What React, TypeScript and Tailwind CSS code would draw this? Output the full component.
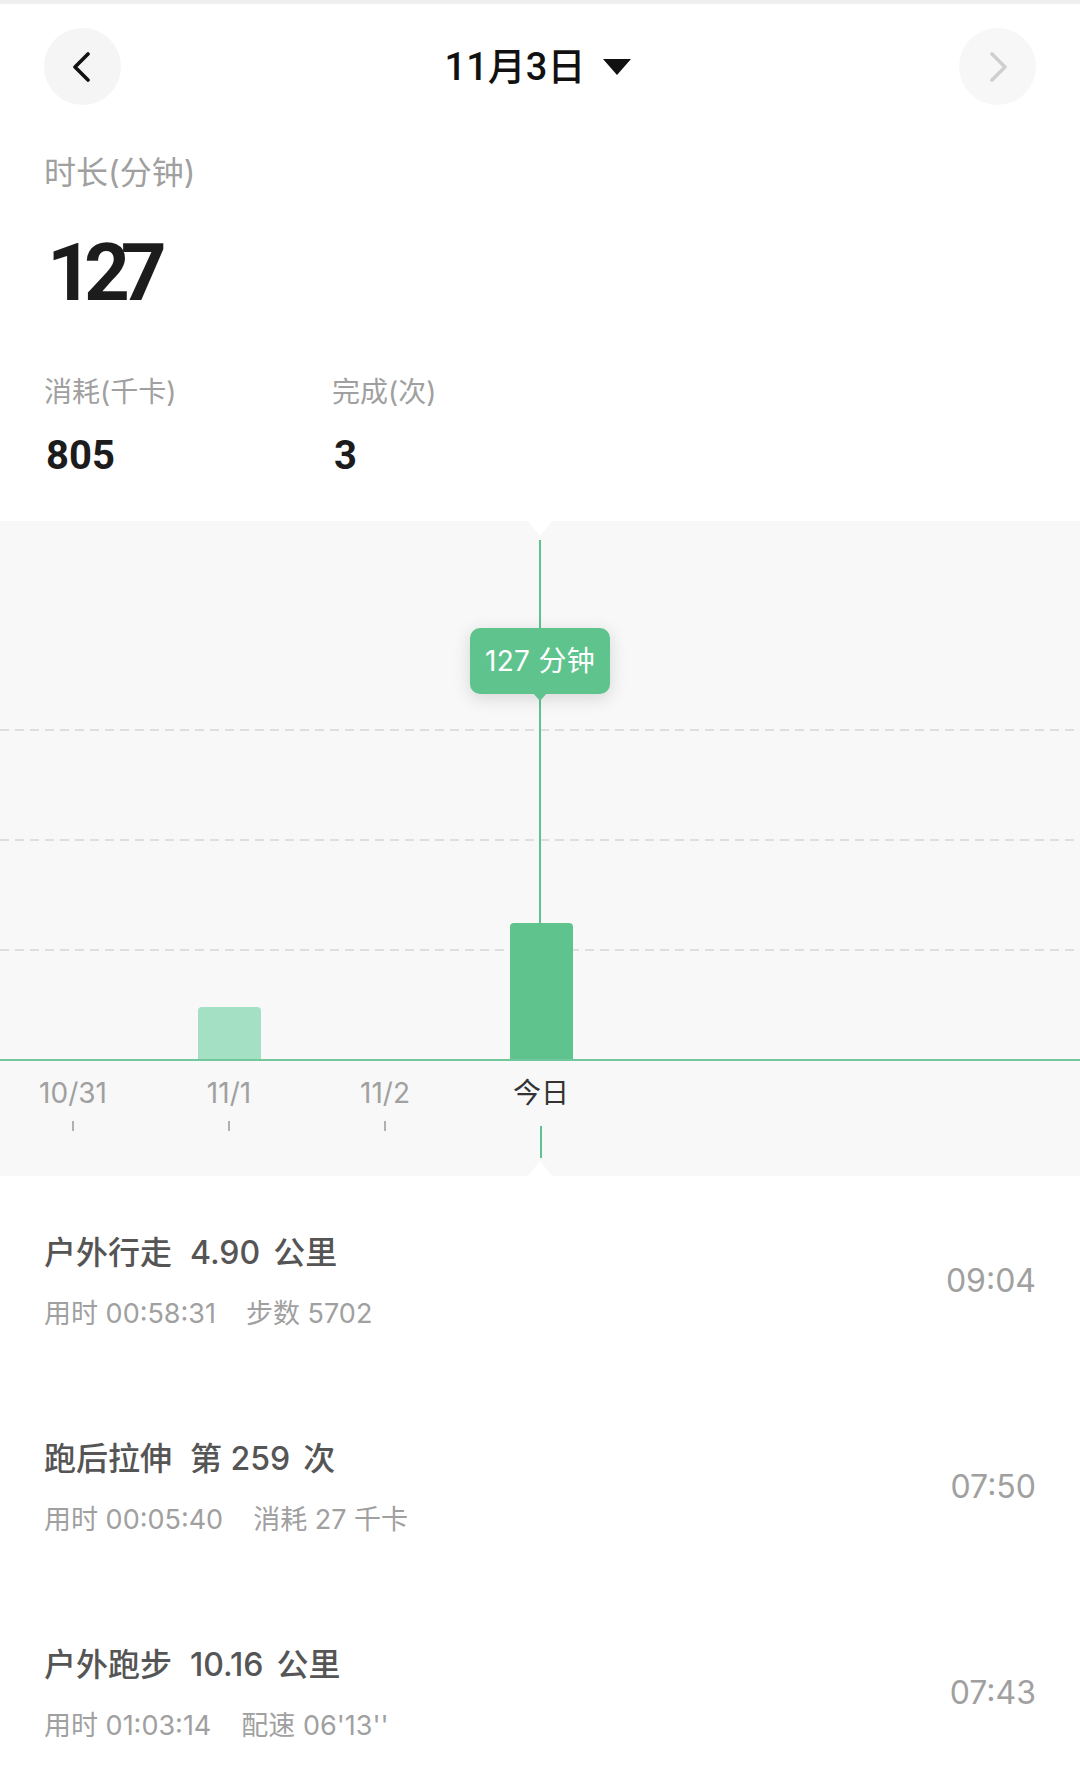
import React from "react";

const GREEN = "#5fc38e";

const days = [
  { label: "10/31", value: 0, today: false },
  { label: "11/1", value: 52, today: false },
  { label: "11/2", value: 0, today: false },
  { label: "今日", value: 136, today: true },
];

const records = [
  { title: ["户外行走", "4.90", "公里"], sub: [["用时", "00:58:31"], ["步数", "5702"]], time: "09:04" },
  { title: ["跑后拉伸", "第 259", "次"], sub: [["用时", "00:05:40"], ["消耗", "27 千卡"]], time: "07:50" },
  { title: ["户外跑步", "10.16", "公里"], sub: [["用时", "01:03:14"], ["配速", "06'13''"]], time: "07:43" },
];

function Chevron({ dir, color }: { dir: "left" | "right"; color: string }) {
  const pts = dir === "left" ? "16,2 3,15 16,28" : "3,2 16,15 3,28";
  return (
    <svg width="19" height="30" viewBox="0 0 19 30" fill="none">
      <polyline points={pts} stroke={color} strokeWidth="3.6" strokeLinecap="round" strokeLinejoin="round" />
    </svg>
  );
}

export default function App() {
  return (
    <div className="w-[1080px] min-h-[1785px] bg-white font-['Inter','Noto_Sans_CJK_SC',sans-serif] select-none">
      <div className="h-[4px] bg-[#efefef]" />

      {/* header */}
      <div className="mt-[24px] px-[44px] flex items-center justify-between h-[77px]">
        <div className="w-[77px] h-[77px] rounded-full bg-[#f5f5f5] flex items-center justify-center pr-[2px]">
          <Chevron dir="left" color="#111" />
        </div>
        <div className="flex items-center gap-[18px] pr-[4px]">
          <span className="font-['Roboto','Noto_Sans_CJK_SC',sans-serif] text-[38px] leading-[42px] font-medium text-[#111]">11月3日</span>
          <svg width="28" height="16" viewBox="0 0 28 16">
            <polygon points="0,0 28,0 14,16" fill="#111" />
          </svg>
        </div>
        <div className="w-[77px] h-[77px] rounded-full bg-[#f7f7f7] flex items-center justify-center pl-[2px]">
          <Chevron dir="right" color="#cfcfcf" />
        </div>
      </div>

      {/* summary */}
      <div className="px-[44px]">
        <p className="mt-[48px] text-[32px] leading-[40px] text-[#a0a0a0]">时长(分钟)</p>
        <p className="mt-[40px] font-['Roboto',sans-serif] font-bold text-[80px] leading-[80px] tracking-[-9px] text-[#1c1c1c] pl-[3px]">127</p>
        <div className="mt-[61px] flex">
          <div className="w-[288px]">
            <p className="text-[28px] leading-[36px] text-[#a0a0a0]">消耗(千卡)</p>
            <p className="mt-[22px] font-['Roboto',sans-serif] font-bold text-[40px] leading-[48px] text-[#1c1c1c] pl-[2px]">805</p>
          </div>
          <div>
            <p className="text-[28px] leading-[36px] text-[#a0a0a0]">完成(次)</p>
            <p className="mt-[22px] font-['Roboto',sans-serif] font-bold text-[40px] leading-[48px] text-[#1c1c1c] pl-[2px]">3</p>
          </div>
        </div>
      </div>

      {/* chart */}
      <div className="mt-[41px] relative h-[655px] bg-[#f8f8f8] overflow-hidden">
        <div className="relative h-[540px] flex flex-col">
          <div className="h-[208px]" />
          {[0, 1, 2].map((i) => (
            <div key={i} className="h-[110px]">
              <div className="h-[2px] bg-[repeating-linear-gradient(to_right,#dedede_0_9px,transparent_9px_15px)]" />
            </div>
          ))}
          <div className="h-[2px] bg-[#72c89c]" />

          {/* bars */}
          <div className="absolute inset-x-0 top-0 bottom-[2px] flex items-end ml-[-5px]">
            {days.map((d) => (
              <div key={d.label} className="w-[156px] flex justify-center">
                {d.value > 0 && (
                  <div
                    className={`w-[63px] rounded-t-[4px] ${d.today ? "bg-[#5fc38e]" : "bg-[#a3e0c4]"}`}
                    style={{ height: d.value }}
                  />
                )}
              </div>
            ))}
          </div>
        </div>

        {/* x axis */}
        <div className="flex ml-[-5px] pt-[14px]">
          {days.map((d) => (
            <div key={d.label} className="w-[156px] flex flex-col items-center">
              <span className={`text-[28px] leading-[36px] ${d.today ? "text-[#333]" : "text-[#a0a0a0]"}`}>{d.label}</span>
              {d.today ? (
                <div className="mt-[15px] w-[2px] h-[32px]" style={{ backgroundColor: GREEN }} />
              ) : (
                <div className="mt-[10px] w-[2px] h-[10px] bg-[#b0b0b0]" />
              )}
            </div>
          ))}
        </div>

        {/* cursor */}
        <div className="absolute left-[539px] top-[19px] w-[2px] h-[403px] bg-[#5fc38e]" />
        <div className="absolute left-[528px] top-0 w-0 h-0 border-x-[12px] border-x-transparent border-t-[15px] border-t-white" />
        <div className="absolute left-[528px] bottom-0 w-0 h-0 border-x-[12px] border-x-transparent border-b-[15px] border-b-white" />

        <div className="absolute left-[470px] top-[107px] w-[140px] h-[66px] rounded-[10px] bg-[#5fc38e] shadow-[0_4px_18px_rgba(0,0,0,0.14)] flex items-center justify-center">
          <span className="text-white text-[28px] leading-[34px] tracking-[0.3px]">127 分钟</span>
          <div className="absolute left-[63px] bottom-[-7px] w-0 h-0 border-x-[7px] border-x-transparent border-t-[8px] border-t-[#5fc38e]" />
        </div>
      </div>

      {/* records */}
      <div>
        {records.map((r) => (
          <div key={r.time} className="h-[206px] px-[44px] flex items-center justify-between">
            <div className="pt-[6px]">
              <p className="text-[32px] leading-[40px] text-[#555] font-medium">
                <span>{r.title[0]}</span>
                <span className="ml-[18px]">{r.title[1]}</span>
                <span className="ml-[13px]">{r.title[2]}</span>
              </p>
              <p className="mt-[24px] text-[27px] leading-[34px] text-[#a0a0a0] flex gap-[30px]">
                {r.sub.map(([k, v]) => (
                  <span key={k}>
                    {k} {v}
                  </span>
                ))}
              </p>
            </div>
            <span className="text-[32px] leading-[40px] text-[#a0a0a0] pt-[4px]">{r.time}</span>
          </div>
        ))}
      </div>
    </div>
  );
}
